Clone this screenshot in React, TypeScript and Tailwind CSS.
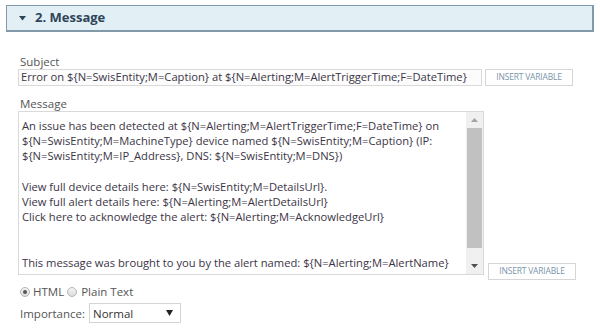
import React from "react";

const lines = [
  "An issue has been detected at ${N=Alerting;M=AlertTriggerTime;F=DateTime} on",
  "${N=SwisEntity;M=MachineType} device named ${N=SwisEntity;M=Caption} (IP:",
  "${N=SwisEntity;M=IP_Address}, DNS: ${N=SwisEntity;M=DNS})",
  "",
  "View full device details here: ${N=SwisEntity;M=DetailsUrl}.",
  "View full alert details here: ${N=Alerting;M=AlertDetailsUrl}",
  "Click here to acknowledge the alert: ${N=Alerting;M=AcknowledgeUrl}",
  "",
  "",
  "This message was brought to you by the alert named: ${N=Alerting;M=AlertName}",
];

function InsertButton() {
  return (
    <button className="flex h-[17px] w-[88px] items-center justify-center border border-[#d6d6d6] bg-white text-[8.5px] tracking-[-0.2px] text-[#7a96aa] uppercase">
      Insert Variable
    </button>
  );
}

function Radio({ checked }: { checked?: boolean }) {
  return (
    <span className="flex h-[10px] w-[10px] items-center justify-center rounded-full border border-[#b5b5b5] bg-gradient-to-b from-[#f4f4f4] to-[#dcdcdc]">
      {checked && <span className="h-[4px] w-[4px] rounded-full bg-[#555]" />}
    </span>
  );
}

export default function App() {
  return (
    <div className="h-[333px] w-[600px] bg-white font-['Open_Sans',sans-serif] text-[#555]">
      <div className="pt-[5px] pl-[6px] pr-[6px]">
        <div className="flex h-[27px] items-center border border-r-2 border-b-2 border-[#8299aa] bg-[#e2f0f6] pl-[12px]">
          <svg width="7" height="5" viewBox="0 0 7 5" className="mr-[9px]">
            <path d="M0 0 L7 0 L3.5 4.5 Z" fill="#2e4458" />
          </svg>
          <span className="text-[13px] font-bold text-[#2e4458]">2. Message</span>
        </div>
      </div>

      <div className="pl-[18px] pt-[23px]">
        <div className="pl-[2px] text-[11.5px] leading-[14px]">Subject</div>
        <div className="flex items-center gap-[3px]">
          <div className="flex h-[17px] w-[464px] items-center border border-[#d9d9d9] bg-[#fcfcfc] pl-[2px] text-[11.2px] whitespace-nowrap text-[#3b3446]">
            Error on {"${N=SwisEntity;M=Caption}"} at {"${N=Alerting;M=AlertTriggerTime;F=DateTime}"}
          </div>
          <InsertButton />
        </div>

        <div className="mt-[11px] pl-[2px] text-[11.5px] leading-[14px]">Message</div>
        <div className="flex items-end gap-[4px]">
          <div className="flex h-[164px] w-[466px] border border-[#d9d9d9] bg-white">
            <div className="flex-1 pl-[3px] pt-[6px] text-[11.2px] leading-[15.2px] whitespace-pre text-[#3b3446]">
              {lines.map((l, i) => (
                <div key={i} className="h-[15.2px]">{l}</div>
              ))}
            </div>
            <div className="flex w-[17px] flex-col bg-[#f0f0f0]">
              <div className="flex h-[16px] items-center justify-center">
                <svg width="7" height="4" viewBox="0 0 7 4"><path d="M0 4 L3.5 0 L7 4 Z" fill="#a3a3a3" /></svg>
              </div>
              <div className="mx-[1px] h-[120px] bg-[#c1c1c1]" />
              <div className="flex-1" />
              <div className="flex h-[16px] items-center justify-center">
                <svg width="7" height="4" viewBox="0 0 7 4"><path d="M0 0 L7 0 L3.5 4 Z" fill="#505050" /></svg>
              </div>
            </div>
          </div>
          <div className="mb-[-5px]">
            <InsertButton />
          </div>
        </div>

        <div className="mt-[8px] flex items-center pl-[2px] text-[11.5px]">
          <Radio checked />
          <span className="ml-[3px] mr-[3px]">HTML</span>
          <Radio />
          <span className="ml-[4px]">Plain Text</span>
        </div>

        <div className="mt-[3px] flex items-center pl-[2px] text-[11.5px]">
          <span>Importance:</span>
          <div className="ml-[4px] flex h-[20px] w-[92px] items-center justify-between border border-[#d4d4d4] bg-white pl-[3px] pr-[7px] text-[#333]">
            <span>Normal</span>
            <svg width="7" height="6" viewBox="0 0 7 6"><path d="M0 0 L7 0 L3.5 6 Z" fill="#222" /></svg>
          </div>
        </div>
      </div>
    </div>
  );
}
